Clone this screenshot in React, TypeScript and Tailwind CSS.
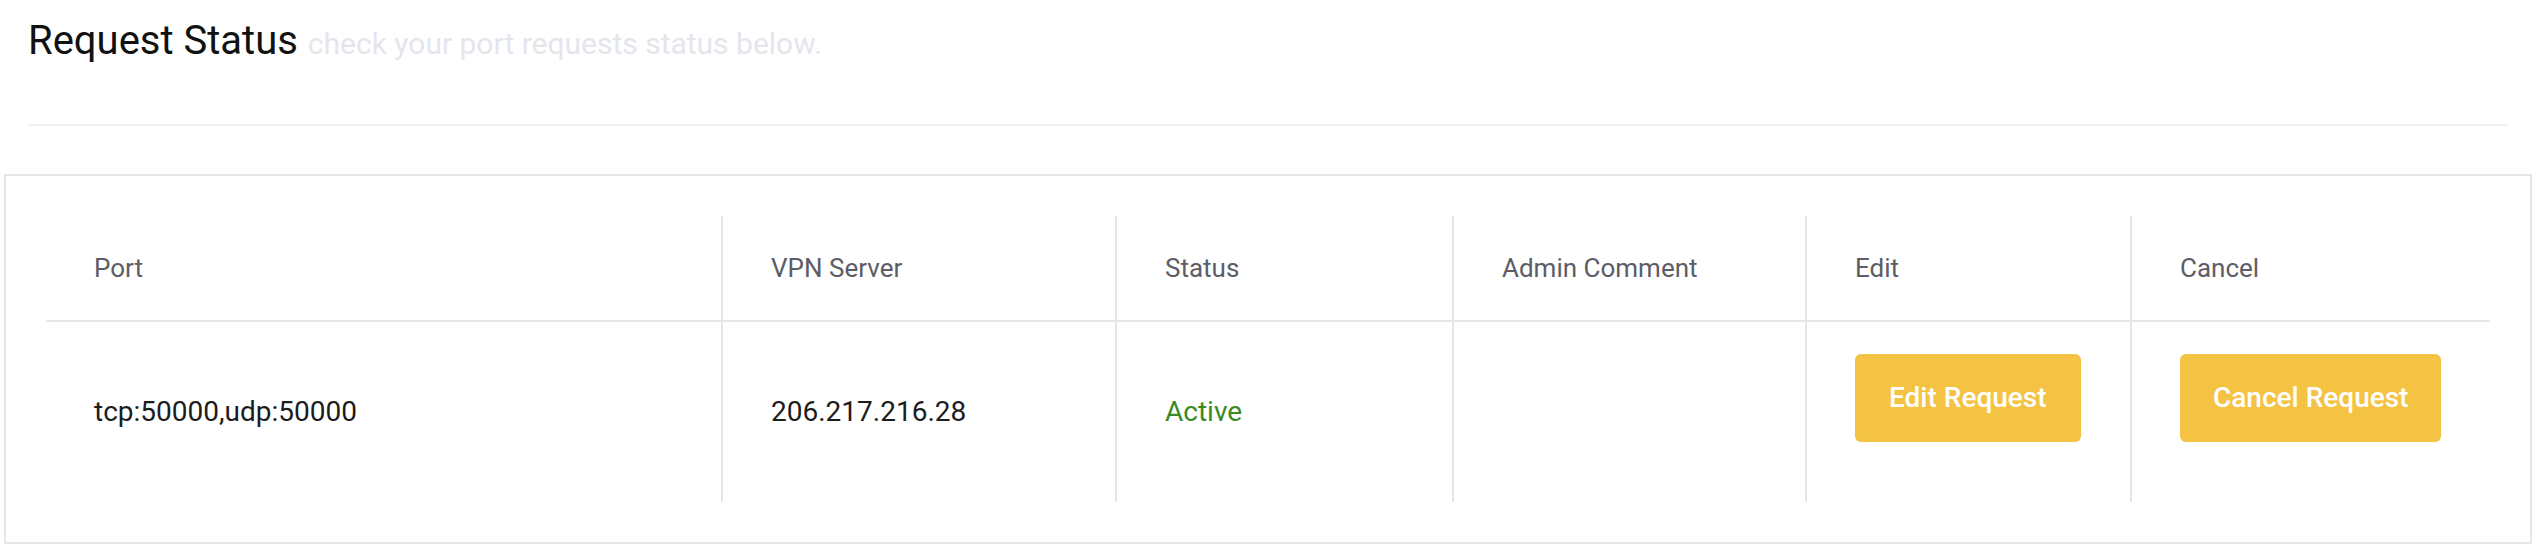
const requests = [
  {
    port: "tcp:50000,udp:50000",
    server: "206.217.216.28",
    status: "Active",
    comment: "",
  },
];

const headers = ["Port", "VPN Server", "Status", "Admin Comment", "Edit", "Cancel"];

const App = () => {
  return (
    <div className="min-h-screen w-full bg-white font-['Roboto','Liberation_Sans',sans-serif]">
      <div className="px-[28px] pt-[17px]">
        <h1 className="h-[48px] text-[40px] leading-[48px] font-normal text-[#111111]">
          Request Status{" "}
          <span className="text-[30px] leading-none text-[#e5e5ec]">
            check your port requests status below.
          </span>
        </h1>
        <div className="mt-[59px] mr-[2px] h-[2px] bg-[#f0f0f2]" />
      </div>

      <div className="mt-[48px] ml-[4px] mr-[6px] border-2 border-[#e5e5ea] p-10">
        <div className="grid grid-cols-[675px_394px_337px_353px_325px_360px]">
          {headers.map((h, i) => (
            <div
              key={"h" + i}
              className={
                "flex h-[106px] items-center border-b-2 border-[#e5e5ea] pl-12 text-[26px] text-[#5c5d66] " +
                (i > 0 ? "border-l-2" : "")
              }
            >
              {h}
            </div>
          ))}
          {requests.map((r, i) => (
            <div key={"r" + i} className="contents">
              <div className="flex h-[180px] items-center pl-12 text-[28px] text-[#1c1c1c]">
                {r.port}
              </div>
              <div className="flex h-[180px] items-center border-l-2 border-[#e5e5ea] pl-12 text-[28px] text-[#1c1c1c]">
                {r.server}
              </div>
              <div className="flex h-[180px] items-center border-l-2 border-[#e5e5ea] pl-12 text-[28px] text-[#3a8a25]">
                {r.status}
              </div>
              <div className="flex h-[180px] items-center border-l-2 border-[#e5e5ea] pl-12 text-[28px] text-[#1c1c1c]">
                {r.comment}
              </div>
              <div className="flex h-[180px] items-start border-l-2 border-[#e5e5ea] pt-[32px] pl-12">
                <button className="h-[88px] rounded-md bg-[#f4c344] px-[34px] text-[28px] font-medium text-white">
                  Edit Request
                </button>
              </div>
              <div className="flex h-[180px] items-start border-l-2 border-[#e5e5ea] pt-[32px] pl-12">
                <button className="h-[88px] rounded-md bg-[#f4c344] px-[33px] text-[28px] font-medium text-white">
                  Cancel Request
                </button>
              </div>
            </div>
          ))}
        </div>
      </div>
    </div>
  );
};

export default App;
